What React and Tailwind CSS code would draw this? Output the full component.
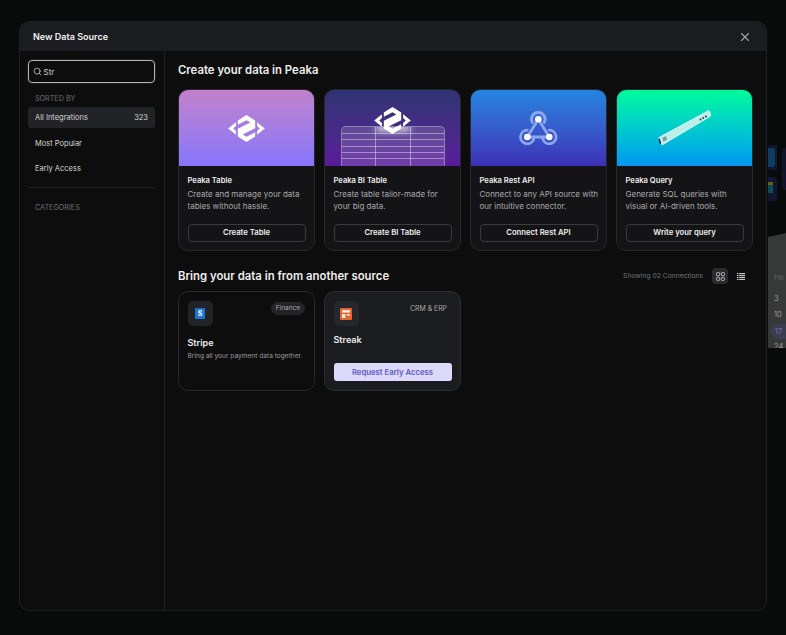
import React from "react";
import { X, Search } from "lucide-react";

const PeakaLogo = ({ className }) => (
  <svg viewBox="0 0 38 28" className={className} fill="#fff">
    <path d="M8 7.6 L8 11.4 L5.2 14 L8 16.6 L8 20.4 L0 14 Z" />
    <path d="M30 7.6 L30 11.4 L32.8 14 L30 16.6 L30 20.4 L38 14 Z" />
    <path d="M10 5.7 L19 0 L28 5.7 L28 13.8 L15 20.3 L19 22.5 L28 17.8 L28 22.3 L19 28 L10 22.3 L10 14.2 L23 7.7 L19 5.5 L10 10.2 Z" />
  </svg>
);

const TableGraphic = () => (
  <div className="absolute left-[16px] top-[36px] w-[104px] h-[40px] rounded-t-[5px] border border-b-0 border-white/30 bg-white/15 overflow-hidden">
    <div className="absolute top-[-3px] left-[34px] w-[34px] h-[8px] bg-white/70 blur-[3px]" />
    <div className="absolute inset-x-0 top-[6px] h-px bg-white/40" />
    <div className="absolute inset-x-0 top-[12px] h-px bg-white/40" />
    <div className="absolute inset-x-0 top-[19px] h-px bg-white/40" />
    <div className="absolute inset-x-0 top-[25px] h-px bg-white/40" />
    <div className="absolute inset-x-0 top-[31px] h-px bg-white/40" />
    <div className="absolute inset-y-0 left-[33px] w-px bg-white/40" />
    <div className="absolute inset-y-0 left-[68px] w-px bg-white/40" />
  </div>
);

const Webhook = () => (
  <svg viewBox="0 0 39 34" className="w-[39px] h-[34px]" fill="none">
    <g stroke="#8ea6ef" strokeWidth="2.8" strokeLinecap="round">
      <path d="M19.3 8.3 L8.3 26" />
      <path d="M19.3 8.3 L30.3 26" />
      <path d="M8.3 26 L30.3 26" />
      <path d="M13.4 11.6 A6.8 6.8 0 1 1 25.2 11.6" />
      <path d="M8.3 19.2 A6.8 6.8 0 1 0 14.8 28" />
      <path d="M30.3 19.2 A6.8 6.8 0 1 1 23.8 28" />
    </g>
    <circle cx="19.3" cy="8.3" r="3.3" fill="#fff" />
    <circle cx="8.3" cy="26" r="3.3" fill="#fff" />
    <circle cx="30.3" cy="26" r="3.3" fill="#fff" />
  </svg>
);

const QueryBar = () => (
  <svg viewBox="0 0 54 38" className="w-[54px] h-[38px]" fill="none">
    <path d="M1.3 28.3 L50 1.9 Q51.5 1.2 51.8 2.8 L52.7 6 Q52.8 7 52 7.5 L4.8 35.6 Q3.8 36.2 3.4 35 L1 29.6 Q0.9 28.6 1.3 28.3 Z" fill="#bdeeea" stroke="#e6faf7" strokeWidth="0.8" />
    <path d="M0.6 30 L1.8 29.5 L3.2 34.6 L1.8 35 Z" fill="#1b1b1b" />
    <path d="M4.4 29 L8 27 L9 30.8 L5.4 32.8 Z" fill="#7d9a9c" />
    <circle cx="42.5" cy="10.4" r="1" fill="#33413f" />
    <circle cx="45.2" cy="8.9" r="1" fill="#33413f" />
    <circle cx="47.9" cy="7.4" r="1" fill="#33413f" />
  </svg>
);

const cards = [
  { t: "Peaka Table", d: ["Create and manage your data", "tables without hassle."], b: "Create Table", g: "from-[#c281cb] to-[#8675fb]", k: "table" },
  { t: "Peaka BI Table", d: ["Create table tailor-made for", "your big data."], b: "Create BI Table", g: "from-[#2f3472] to-[#591b9b]", k: "bi" },
  { t: "Peaka Rest API", d: ["Connect to any API source with", "our intuitive connector."], b: "Connect Rest API", g: "from-[#2385e0] to-[#3b2fb6]", k: "rest" },
  { t: "Peaka Query", d: ["Generate SQL queries with", "visual or AI-driven tools."], b: "Write your query", g: "from-[#00fb97] to-[#0a96f0]", k: "query" },
];

function Card({ c }) {
  return (
    <div className="rounded-[10px] border border-[#27282b] bg-[#141416] overflow-hidden flex flex-col h-[162px]">
      <div className={`relative h-[76px] shrink-0 bg-gradient-to-b ${c.g} flex items-center justify-center`}>
        {c.k === "table" && <PeakaLogo className="w-[37px] h-[27px]" />}
        {c.k === "bi" && (
          <>
            <div className="absolute top-[17px] left-0 right-0 flex justify-center">
              <PeakaLogo className="w-[37px] h-[27px]" />
            </div>
            <TableGraphic />
          </>
        )}
        {c.k === "rest" && <Webhook />}
        {c.k === "query" && <QueryBar />}
      </div>
      <div className="px-[8.5px] pt-[9px] flex flex-col flex-1 pb-[8px]">
        <div className="text-[7.6px] leading-[12px] font-semibold text-[#eeeeee]">{c.t}</div>
        <div className="mt-[2px] text-[8px] leading-[11.5px] text-[#a9a9ab] whitespace-nowrap">
          {c.d.map((l) => (
            <div key={l}>{l}</div>
          ))}
        </div>
        <button className="mt-auto h-[18.5px] rounded-[4px] border border-[#3a3b3e] text-[7.7px] font-semibold text-[#eeeeee] flex items-center justify-center">
          {c.b}
        </button>
      </div>
    </div>
  );
}

export default function App() {
  return (
    <div className="relative w-[786px] h-[635px] bg-[#090b0b] overflow-hidden font-['Inter',sans-serif]">
      {/* page peeking out behind the dialog */}
      <div className="absolute left-[768px] top-[145px] w-[9px] h-[25px] rounded-l-[3px] bg-[#0f1830]">
        <div className="absolute left-0 top-[3px] w-[7px] h-[19px] rounded-r-[2px] bg-[#103c60]" />
      </div>
      <div className="absolute left-[782px] top-[148px] w-[4px] h-[42px] rounded-l-[3px] bg-[#12142c]" />
      <div className="absolute left-[768px] top-[177px] w-[9px] h-[24px] rounded-r-[3px] bg-[#0f1830]">
        <div className="absolute left-0 top-[5px] w-[5px] h-[3px] bg-[#6a5e14]" />
        <div className="absolute left-0 top-[8px] w-[5px] h-[8px] bg-[#104a56]" />
      </div>
      <div className="absolute left-[768px] top-[233px] w-[18px] h-[115px] bg-[#373838] [clip-path:polygon(0_4px,100%_0,100%_100%,0_100%)]">
        <span className="absolute left-[6px] top-[41px] text-[6.5px] leading-[8px] text-[#666]">FRI</span>
        <span className="absolute left-[6px] top-[61px] text-[7.5px] leading-[9px] text-[#9a9a9a]">3</span>
        <span className="absolute left-[6px] top-[77px] text-[7.5px] leading-[9px] text-[#9a9a9a]">10</span>
        <span className="absolute left-[3px] top-[91px] w-[15px] h-[15px] rounded-l-full bg-[#3b3d50] text-[7.5px] leading-[15px] text-center text-[#6d6fbe]">17</span>
        <span className="absolute left-[6px] top-[109px] text-[7.5px] leading-[9px] text-[#9a9a9a]">24</span>
      </div>

      <div className="absolute left-[19px] top-[21px] w-[748px] h-[590px] rounded-[10px] border border-[#1f2022] bg-[#0d0d0e] flex flex-col overflow-hidden">
        <div className="h-[29px] shrink-0 bg-[#1b1c1f] flex items-center justify-between pl-[13px] pr-[14px]">
          <span className="text-[9px] font-semibold text-[#f0f0f0]">New Data Source</span>
          <X className="w-[14px] h-[14px] text-[#a0a0a2]" strokeWidth={2} />
        </div>
        <div className="flex flex-1 min-h-0">
          <aside className="w-[145px] shrink-0 border-r border-[#1f2022] pl-[8px] pr-[9px] pt-[9px]">
            <div className="h-[23px] rounded-[4px] border-[1.5px] border-[#b5b5b5] flex items-center gap-[2px] pl-[3.5px] text-[#d0d0d0] shadow-[0_0_0_1px_#1d1d1f]">
              <Search className="w-[9px] h-[9px]" strokeWidth={2} />
              <span className="text-[8px]">Str</span>
            </div>
            <div className="mt-[11px] px-[7px] text-[7.2px] leading-[9px] text-[#6f6f71]">SORTED BY</div>
            <div className="mt-[4px] pt-[1px] h-[21px] rounded-[3px] bg-[#222326] flex items-center justify-between px-[7px] text-[7.5px] text-[#d5d5d5]">
              <span>All Integrations</span>
              <span>323</span>
            </div>
            <div className="h-[25px] mt-[2.5px] pt-[1px] flex items-center px-[7px] text-[7.5px] text-[#d5d5d5]">Most Popular</div>
            <div className="h-[25px] pt-[1px] flex items-center px-[7px] text-[7.5px] text-[#d5d5d5]">Early Access</div>
            <div className="mt-[6.5px] border-t border-[#1f2022]" />
            <div className="mt-[14.5px] px-[7px] text-[7.2px] leading-[9px] text-[#6f6f71]">CATEGORIES</div>
          </aside>
          <main className="flex-1 px-[13px] pt-[12px]">
            <h2 className="text-[11.35px] leading-[15px] font-semibold text-[#eeeeee]">Create your data in Peaka</h2>
            <div className="mt-[11px] grid grid-cols-[repeat(4,137px)] gap-[9px]">
              {cards.map((c) => (
                <Card key={c.t} c={c} />
              ))}
            </div>
            <div className="mt-[17px] flex items-center justify-between w-[575px] h-[16px]">
              <h2 className="text-[11.35px] font-semibold text-[#eeeeee]">Bring your data in from another source</h2>
              <div className="flex items-center pr-[4.5px]">
                <span className="text-[6.75px] text-[#737375]">Showing 02 Connections</span>
                <span className="ml-[9px] w-[16px] h-[16px] rounded-[4px] bg-[#2a2b2e] flex items-center justify-center">
                  <svg viewBox="0 0 9 9" className="w-[9px] h-[9px]" fill="none" stroke="#c5c5c5" strokeWidth="1">
                    <rect x="0.5" y="0.5" width="3.2" height="3.2" rx="1.2" />
                    <rect x="5.3" y="0.5" width="3.2" height="3.2" rx="1.2" />
                    <rect x="0.5" y="5.3" width="3.2" height="3.2" rx="1.2" />
                    <rect x="5.3" y="5.3" width="3.2" height="3.2" rx="1.2" />
                  </svg>
                </span>
                <span className="ml-[4.5px] w-[16px] h-[16px] flex items-center justify-center">
                  <svg viewBox="0 0 8 7" className="w-[8px] h-[7px]" fill="#c5c5c5">
                    <rect x="0" y="0" width="1.5" height="1.2" />
                    <rect x="2.2" y="0" width="5.8" height="1.2" />
                    <rect x="0" y="2" width="1.5" height="1.2" />
                    <rect x="2.2" y="2" width="5.8" height="1.2" />
                    <rect x="0" y="4" width="1.5" height="1.2" />
                    <rect x="2.2" y="4" width="5.8" height="1.2" />
                    <rect x="0" y="6" width="1.5" height="1" />
                    <rect x="2.2" y="6" width="5.8" height="1" />
                  </svg>
                </span>
              </div>
            </div>
            <div className="mt-[7px] grid grid-cols-[repeat(4,137px)] gap-[9px]">
              <div className="relative h-[100px] rounded-[10px] border border-[#27282b] bg-[#0d0d0e] px-[8.5px] pt-[9px]">
                <span className="absolute right-[9px] top-[10px] h-[13px] px-[5px] rounded-full bg-[#232427] text-[6.5px] leading-[13px] text-[#aaaaac]">Finance</span>
                <div className="w-[25px] h-[25px] rounded-[5px] bg-[#222326] flex items-center justify-center">
                  <span className="w-[10px] h-[11px] rounded-[1px] bg-[#1b76cf] text-white text-[7px] font-bold leading-[11px] text-center">S</span>
                </div>
                <div className="mt-[10px] text-[9px] leading-[13px] font-semibold text-[#eeeeee]">Stripe</div>
                <div className="mt-[2px] text-[6.6px] leading-[10px] text-[#9b9b9d] whitespace-nowrap">Bring all your payment data together.</div>
              </div>
              <div className="relative h-[100px] rounded-[10px] border border-[#2c2d30] bg-[#1b1c1f] px-[8.5px] pt-[9px] pb-[9px] flex flex-col">
                <span className="absolute right-[13px] top-[11.5px] text-[6.9px] leading-[10px] text-[#a8a8aa]">CRM &amp; ERP</span>
                <div className="w-[25px] h-[25px] rounded-[5px] bg-[#26272a] flex items-center justify-center">
                  <svg viewBox="0 0 12 12" className="w-[12px] h-[12px]">
                    <rect width="12" height="12" rx="1" fill="#e8632d" />
                    <rect x="2" y="2" width="8" height="2.6" fill="#fbe3d6" />
                    <rect x="2" y="6" width="3.4" height="4" fill="#fbe3d6" />
                    <rect x="6.6" y="6" width="3.4" height="1.6" fill="#fbe3d6" />
                  </svg>
                </div>
                <div className="mt-[7px] text-[9px] leading-[13px] font-semibold text-[#eeeeee]">Streak</div>
                <button className="mt-auto h-[18px] pt-[1px] rounded-[3px] bg-[#dcd9fb] text-[7.75px] font-semibold text-[#5a5ac8]">Request Early Access</button>
              </div>
            </div>
          </main>
        </div>
      </div>
    </div>
  );
}
